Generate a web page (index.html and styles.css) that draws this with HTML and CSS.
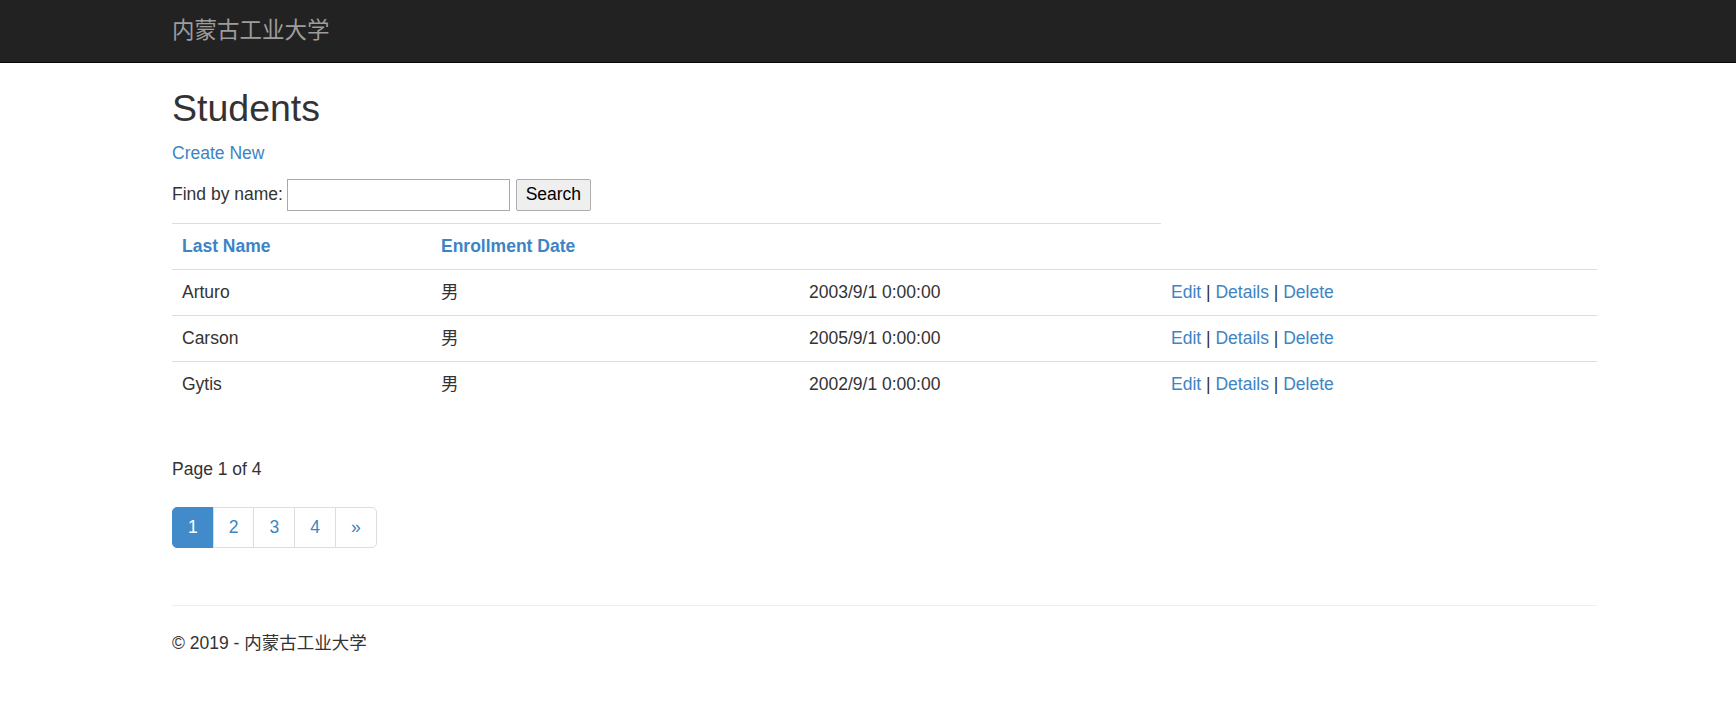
FILE: index.html
```html
<!DOCTYPE html>
<html lang="zh">
<head>
<meta charset="utf-8">
<title>Students</title>
<link rel="stylesheet" href="styles.css">
</head>
<body>
<header class="navbar">
  <div class="container">
    <a class="brand" href="#">内蒙古工业大学</a>
  </div>
</header>
<main class="container">
  <h2 class="title">Students</h2>
  <p class="create"><a href="#">Create New</a></p>
  <form class="search">
    <span class="search-label">Find by name:</span>
    <input class="search-input" type="text">
    <button class="search-btn" type="button">Search</button>
  </form>
  <table class="table">
    <tr>
      <th class="c1"><a href="#">Last Name</a></th>
      <th class="c2"><a href="#">Enrollment Date</a></th>
      <th class="c3"></th>
    </tr>
    <tr>
      <td>Arturo</td>
      <td>男</td>
      <td>2003/9/1 0:00:00</td>
      <td><a href="#">Edit</a> | <a href="#">Details</a> | <a href="#">Delete</a></td>
    </tr>
    <tr>
      <td>Carson</td>
      <td>男</td>
      <td>2005/9/1 0:00:00</td>
      <td><a href="#">Edit</a> | <a href="#">Details</a> | <a href="#">Delete</a></td>
    </tr>
    <tr>
      <td>Gytis</td>
      <td>男</td>
      <td>2002/9/1 0:00:00</td>
      <td><a href="#">Edit</a> | <a href="#">Details</a> | <a href="#">Delete</a></td>
    </tr>
  </table>
  <p class="page-info">Page 1 of 4</p>
  <ul class="pagination">
    <li class="active"><a href="#">1</a></li>
    <li><a href="#">2</a></li>
    <li><a href="#">3</a></li>
    <li><a href="#">4</a></li>
    <li><a href="#">»</a></li>
  </ul>
  <hr class="rule">
  <footer class="footer">
    <p>© 2019 - 内蒙古工业大学</p>
  </footer>
</main>
</body>
</html>
```

FILE: styles.css
```css
* { box-sizing: border-box; }
html, body { margin: 0; padding: 0; }
body {
  font-family: "Liberation Sans", Arial, "Noto Sans CJK SC", sans-serif;
  font-size: 17.5px;
  line-height: 25px;
  color: #333;
  background: #fff;
}
a { color: #3d84c4; text-decoration: none; }

.container {
  width: 1425px;
  margin-left: 172px;
}

.navbar {
  background: #222;
  border-bottom: 1px solid #080808;
  height: 62.5px;
}
.brand {
  display: block;
  color: #9d9d9d;
  font-size: 22.5px;
  line-height: 25px;
  padding: 18px 0;
  width: max-content;
}

.title {
  margin: 25px 0 12.5px;
  font-size: 37.5px;
  line-height: 41.25px;
  font-weight: normal;
  color: #333;
}
.create { margin: 0 0 12.5px; }

.search {
  display: flex;
  align-items: center;
  height: 32px;
  margin: 0 0 12.5px;
}
.search-label { margin-right: 4px; }
.search-input {
  width: 223px;
  height: 32px;
  border: 1px solid #a9a9a9;
  padding: 1px 2px;
  font: inherit;
  margin: 0 6px 0 0;
  background: #fff;
}
.search-btn {
  width: 75px;
  height: 32px;
  border: 1px solid #adadad;
  background: #efefef;
  color: #000;
  font: inherit;
  padding: 0;
  margin: 0;
  border-radius: 2px;
}

.table {
  width: 1425px;
  border-collapse: collapse;
  margin-bottom: 25px;
}
.table th, .table td {
  padding: 10px;
  line-height: 25px;
  border-top: 1px solid #ddd;
  text-align: left;
  vertical-align: top;
}
.table th { font-weight: bold; }
.table .c1 { width: 259px; }
.table .c2 { width: 368px; }
.table .c3 { width: 362px; }

.page-info { margin: 50px 0 0; }

.pagination {
  display: flex;
  list-style: none;
  padding: 0;
  margin: 25px 0 57px;
}
.pagination li a {
  display: block;
  padding: 7px 15px;
  line-height: 25px;
  border: 1px solid #ddd;
  margin-left: -1px;
  background: #fff;
  color: #3d84c4;
}
.pagination li:first-child a {
  margin-left: 0;
  border-radius: 5px 0 0 5px;
}
.pagination li:last-child a { border-radius: 0 5px 5px 0; }
.pagination li.active a {
  background: #428bca;
  border-color: #428bca;
  color: #fff;
}

.rule {
  border: 0;
  border-top: 1px solid #eee;
  margin: 0 0 25px;
  height: 0;
}
.footer p { margin: 0 0 12.5px; }
```
